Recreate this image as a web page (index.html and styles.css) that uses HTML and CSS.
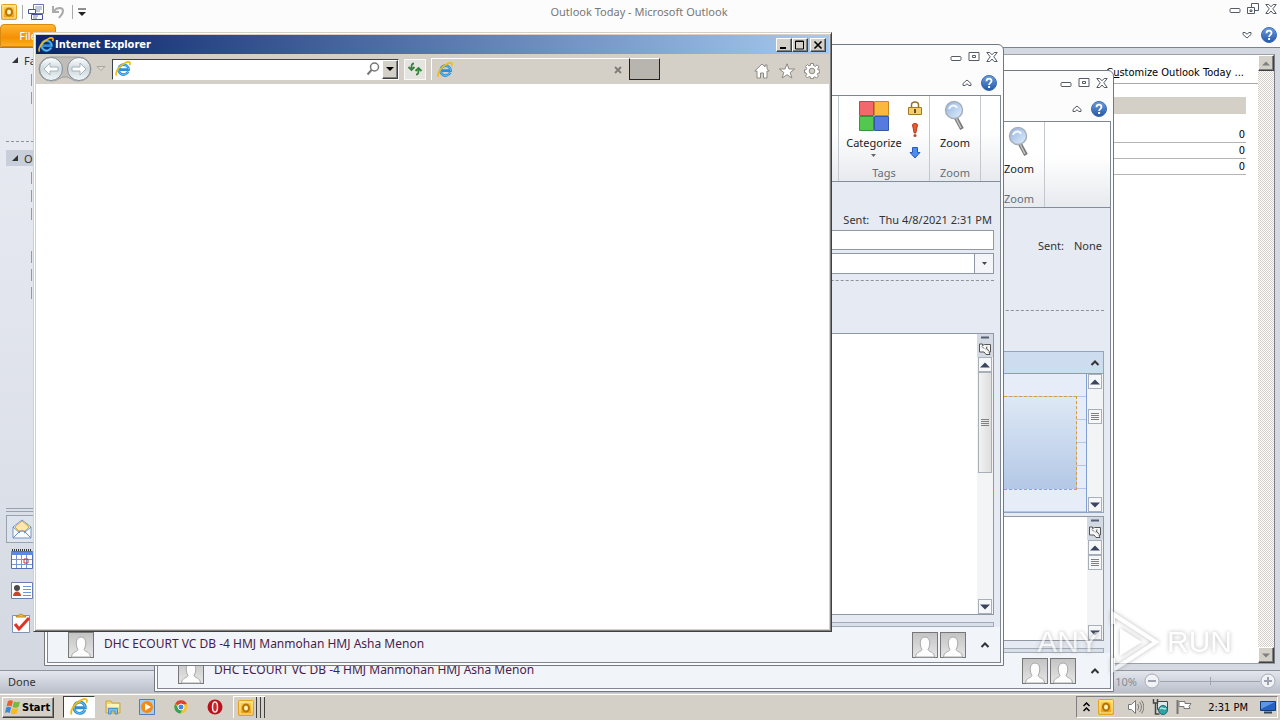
FILE: index.html
```
<!DOCTYPE html>
<html lang="en">
<head>
    <meta charset="UTF-8">
    <meta name="viewport" content="width=device-width, initial-scale=1.0">
    <link rel="stylesheet" href="styles.css">
    <title>Desktop</title>
</head>
<body>

    <!-- shared icons -->
    <svg class="sprite" width="0" height="0" aria-hidden="true">
        <defs>
            <linearGradient id="gold" x1="0" y1="0" x2="0" y2="1"><stop offset="0" stop-color="#ffd65a"/><stop offset="1" stop-color="#eb9a08"/></linearGradient>
            <linearGradient id="blue" x1="0" y1="0" x2="0" y2="1"><stop offset="0" stop-color="#6e9fe0"/><stop offset="1" stop-color="#2456a8"/></linearGradient>
            <linearGradient id="ball" x1="0" y1="0" x2="0" y2="1"><stop offset="0" stop-color="#ffffff"/><stop offset="0.5" stop-color="#cfd8dd"/><stop offset="1" stop-color="#f2f7f9"/></linearGradient>
            <linearGradient id="photo" x1="0" y1="0" x2="0" y2="1"><stop offset="0" stop-color="#c3c3c3"/><stop offset="1" stop-color="#e6e6e6"/></linearGradient>
            <linearGradient id="lens" x1="0" y1="0" x2="1" y2="1"><stop offset="0" stop-color="#8fb0e0"/><stop offset="1" stop-color="#e3f1fd"/></linearGradient>
        </defs>
        <symbol id="ie" viewBox="0 0 16 16">
            <path d="M13.2 10.6A5 5 0 1 1 13.6 8.6H4.6" fill="none" stroke="#2b8fd8" stroke-width="2.6"/>
            <path d="M13.2 10.6A5 5 0 1 1 13.6 8.6" fill="none" stroke="#74c8f5" stroke-width="0.8"/>
            <path d="M1.6 14.6C-.6 12 4 4.600 10 1.900 14-.1 16 .9 14.600 4.200" fill="none" stroke="#f2b90f" stroke-width="1.600"/>
        </symbol>
        <symbol id="outlook" viewBox="0 0 16 16">
            <rect x="0.5" y="0.5" width="15" height="15" rx="1" fill="url(#gold)" stroke="#e9a21c"/>
            <rect x="2" y="2" width="12" height="12" fill="none" stroke="#fff0b4"/>
            <ellipse cx="8" cy="8" rx="3" ry="3.500" fill="#fff3b8" stroke="#b87400" stroke-width="2"/>
        </symbol>
        <symbol id="help" viewBox="0 0 16 16">
            <circle cx="8" cy="8" r="7.500" fill="url(#blue)" stroke="#3a6cb4"/>
            <path d="M5.500 6.200C5.600 2.800 10.600 3 10.500 6 10.400 7.800 8.100 7.900 8.100 10" fill="none" stroke="#fff" stroke-width="1.800"/>
            <rect x="7.100" y="11" width="2" height="2" fill="#fff"/>
        </symbol>
        <symbol id="win-min" viewBox="0 0 12 12"><rect x="1" y="5.500" width="10" height="4" rx="1" fill="#fff" stroke="#555b66"/></symbol>
        <symbol id="win-max" viewBox="0 0 12 12"><path d="M1 1.500h10v8H1zM4.500 4.500h3v2h-3z" fill="#fff" stroke="#555b66"/></symbol>
        <symbol id="win-restore" viewBox="0 0 12 12"><path d="M4.500.5h7v7h-7z" fill="#fff" stroke="#555b66"/><path d="M.5 4.500h7v6h-7zM3 7h2v1.500H3z" fill="#fff" stroke="#555b66"/></symbol>
        <symbol id="win-close" viewBox="0 0 12 12"><path d="M.8 1.500h3L6 3.800 8.200 1.500h3L7.800 5.800l3.400 4.700h-3L6 8 3.800 10.500h-3l3.400-4.700z" fill="#fff" stroke="#555b66"/></symbol>
        <symbol id="caret-up" viewBox="0 0 10 8"><path d="M5 1 9 4.500V6.500H7L5 4.800 3 6.500H1V4.500z" fill="#fff" stroke="#555b66"/></symbol>
        <symbol id="caret-down" viewBox="0 0 10 8"><path d="M5 7 1 3.500V1.500H3L5 3.200 7 1.500H9V3.500z" fill="#fff" stroke="#555b66"/></symbol>
        <symbol id="chevron" viewBox="0 0 10 8"><path d="M1.500 6 5 2.500 8.500 6" fill="none" stroke="#333" stroke-width="2"/></symbol>
        <symbol id="up" viewBox="0 0 10 6"><path d="M0 5.500 5 .5l5 5z" fill="currentColor"/></symbol>
        <symbol id="down" viewBox="0 0 10 6"><path d="M0 .5 5 5.500l5-5z" fill="currentColor"/></symbol>
        <symbol id="split" viewBox="0 0 14 20">
            <path d="M3 2h8" stroke="#56606e" stroke-width="2"/>
            <path d="M1.500 8.500h3v1.500l2-1h6v7.500h-1.500l1 2.500h-4l-2-2.500h-4.500z" fill="#f5f5f5" stroke="#555"/>
            <path d="M4 11l2 2m3-2l-1 3m1-1l2 3" stroke="#555"/>
        </symbol>
        <symbol id="grip" viewBox="0 0 8 8"><path d="M0 .5h8M0 2.500h8M0 4.500h8M0 6.500h8" stroke="#808080"/></symbol>
        <symbol id="person" viewBox="0 0 26 26">
            <rect x="0.500" y="0.500" width="25" height="25" fill="url(#photo)" stroke="#777"/>
            <path d="M3.500 25C4 19 9 20.500 10 17.500 7.500 14 7 5 13 5s5.500 9 3 12.500c1 3 6 1.500 6.500 7.500z" fill="#fdfdfd" stroke="#a9a9a9"/>
        </symbol>
        <symbol id="magnifier" viewBox="0 0 24 32">
            <path d="M13 18 19 29" stroke="#777" stroke-width="4"/>
            <path d="M13 18 18 28" stroke="#c4c4c4" stroke-width="1.500"/>
            <circle cx="11" cy="10" r="8.500" fill="url(#lens)" stroke="#a7afbb" stroke-width="1.500"/>
            <path d="M6 9c2-5 7-4 8-1" fill="none" stroke="#f4f9ff" stroke-width="2"/>
        </symbol>
        <symbol id="zoom-out" viewBox="0 0 16 16"><circle cx="8" cy="8" r="7" fill="#f1f2f5" stroke="#a9adb7"/><path d="M4 8h8" stroke="#9da1ab" stroke-width="2"/></symbol>
        <symbol id="zoom-in" viewBox="0 0 16 16"><circle cx="8" cy="8" r="7" fill="#f1f2f5" stroke="#a9adb7"/><path d="M4 8h8M8 4v8" stroke="#9da1ab" stroke-width="2"/></symbol>
    </svg>

    <div class="desktop">

        <!-- Outlook main window -->
        <main class="outlook">
            <header class="outlook-title">
                <div class="quick">
                    <svg width="16" height="16"><use href="#outlook"/></svg>
                    <i></i>
                    <svg width="16" height="16" viewBox="0 0 16 16"><path d="M5.500.5h10v9h-10z" fill="#fff" stroke="#6a74a8"/><path d="M7 3h7M7 5h7M7 7h5" stroke="#8a93bb"/><path d="M.5 5.500h7v4h-7zM3.500 10.500h11v5h-11z" fill="#fff" stroke="#454f96"/><path d="M5 12h5M5 14h4" stroke="#7680b4"/></svg>
                    <svg class="undo" width="14" height="14" viewBox="0 0 14 14"><path d="M2 1v6h6M3 6c3-4 9-4 9 0 0 3-2 4-4 7" fill="none" stroke="#aaa" stroke-width="2"/></svg>
                    <i></i>
                    <svg width="8" height="8" viewBox="0 0 8 8"><path d="M0 1h8" stroke="#222"/><path d="M0 4h8L4 8z" fill="#222"/></svg>
                </div>
                <span>Outlook Today - Microsoft Outlook</span>
                <div class="controls">
                    <svg width="12" height="12"><use href="#win-min"/></svg>
                    <svg width="12" height="12"><use href="#win-restore"/></svg>
                    <svg width="12" height="12"><use href="#win-close"/></svg>
                </div>
            </header>
            <div class="outlook-tabs">
                <button class="file">File</button>
                <div class="tab-tools">
                    <svg width="10" height="8"><use href="#caret-down"/></svg>
                    <svg width="16" height="16"><use href="#help"/></svg>
                </div>
            </div>

            <div class="outlook-body">
                <nav class="folders">
                    <div class="folder-head"><svg width="6" height="6" viewBox="0 0 6 6"><path d="M6 0v6H0z" fill="#333"/></svg>Favorites</div>
                    <div class="folder"></div>
                    <div class="folder"></div>
                    <hr>
                    <div class="folder-head current"><svg width="6" height="6" viewBox="0 0 6 6"><path d="M6 0v6H0z" fill="#333"/></svg>Outlook</div>
                    <div class="folder"></div>
                    <div class="folder"></div>
                    <div class="folder"></div>
                    <div class="folder spaced"></div>
                    <div class="folder"></div>
                    <div class="folder"></div>
                    <div class="modules">
                        <button class="module active" aria-label="Mail"><svg width="20" height="20" viewBox="0 0 20 20"><path d="M1 8 10 1l9 7v11H1z" fill="#f8fbff" stroke="#7893bd"/><path d="M3 8l7-6 7 6-4 4H7z" fill="#ffe9a8" stroke="#d9aa4d"/><path d="M1 19l7-7h4l7 7M1 8l7 6M19 8l-7 6" fill="none" stroke="#6a8cc0"/></svg></button>
                        <button class="module" aria-label="Calendar"><svg width="22" height="20" viewBox="0 0 22 20"><path d="M.5 2.500h21v17H.5z" fill="#fff" stroke="#5470b0"/><path d="M0 3h22v3H0z" fill="#5b8ae0"/><path d="M1 1h20" stroke="#333" stroke-dasharray="1 1" stroke-width="2"/><path d="M1 10.500h20M1 15.500h20M5.500 6v13M10.500 6v13M15.500 6v13" stroke="#7a94cf"/><path d="M13 10h4v4h-4z" fill="none" stroke="#c33"/></svg></button>
                        <button class="module" aria-label="Contacts"><svg width="22" height="18" viewBox="0 0 22 18"><path d="M.5.5h21v16H.5z" fill="#fff" stroke="#6b7fa8"/><circle cx="6" cy="6" r="3" fill="#4b4a4a"/><path d="M2 14c0-6 8-6 8 0z" fill="#c4472a"/><path d="M12 4.500h8M12 7.500h8M12 10.500h8M12 13.500h8" stroke="#6c96d8"/></svg></button>
                        <button class="module" aria-label="Tasks"><svg width="20" height="20" viewBox="0 0 20 20"><path d="M1.500 2.500h17v17h-17z" fill="#fff" stroke="#7f93b5"/><path d="M5 4c0-2 3-1 5-3 2 2 5 1 5 3z" fill="#f0c04a" stroke="#b98a1e"/><path d="M4 11l4 5L18 5" fill="none" stroke="#df3526" stroke-width="3"/></svg></button>
                    </div>
                </nav>
                <section class="today">
                    <div class="today-page">
                        <div class="today-top"><a href="#">C<u>u</u>stomize Outlook Today ...</a></div>
                        <div class="today-bar"></div>
                        <table class="counts">
                            <tr><td>0</td></tr>
                            <tr><td>0</td></tr>
                            <tr><td>0</td></tr>
                        </table>
                    </div>
                    <div class="classic-scroll">
                        <button aria-label="Scroll up"><svg width="8" height="5"><use href="#up"/></svg></button>
                        <button aria-label="Scroll down"><svg width="8" height="5"><use href="#down"/></svg></button>
                    </div>
                </section>
            </div>

            <footer class="status">
                <span>Done</span>
                <div class="zoom-level">
                    <span>10%</span>
                    <svg width="16" height="16"><use href="#zoom-out"/></svg>
                    <div class="zoom-track"></div>
                    <svg width="16" height="16"><use href="#zoom-in"/></svg>
                </div>
            </footer>
        </main>

        <!-- meeting window -->
        <section class="message meeting">
            <div class="message-title">
                <svg width="12" height="12"><use href="#win-min"/></svg>
                <svg width="12" height="12"><use href="#win-max"/></svg>
                <svg width="12" height="12"><use href="#win-close"/></svg>
            </div>
            <div class="message-tabs">
                <svg width="10" height="8"><use href="#caret-up"/></svg>
                <svg width="16" height="16"><use href="#help"/></svg>
            </div>
            <div class="frame">
                <div class="ribbon">
                    <div class="group group-zoom">
                        <button class="big"><svg width="24" height="32"><use href="#magnifier"/></svg>Zoom</button>
                        <span class="group-name">Zoom</span>
                    </div>
                    <div class="group-rest"></div>
                </div>
                <div class="content">
                    <div class="sent"><span>Sent:</span><span>None</span></div>
                    <hr>
                    <div class="preview">
                        <div class="preview-head"><svg width="10" height="8"><use href="#chevron"/></svg></div>
                        <div class="preview-body">
                            <div class="hours"><div class="slot"></div></div>
                            <div class="scroll">
                                <button aria-label="Scroll up"><svg width="10" height="6"><use href="#up"/></svg></button>
                                <div class="thumb"><svg width="8" height="8"><use href="#grip"/></svg></div>
                                <button aria-label="Scroll down"><svg width="10" height="6"><use href="#down"/></svg></button>
                            </div>
                        </div>
                    </div>
                    <div class="text-box">
                        <div class="scroll">
                            <svg class="split" width="14" height="20"><use href="#split"/></svg>
                            <button aria-label="Scroll up"><svg width="10" height="6"><use href="#up"/></svg></button>
                            <div class="thumb"><svg width="8" height="8"><use href="#grip"/></svg></div>
                            <button aria-label="Scroll down"><svg width="10" height="6"><use href="#down"/></svg></button>
                        </div>
                    </div>
                    <div class="splitter"></div>
                </div>
                <div class="people">
                    <svg width="26" height="26"><use href="#person"/></svg>
                    <span>DHC ECOURT VC DB -4 HMJ Manmohan HMJ Asha Menon</span>
                    <svg width="26" height="26"><use href="#person"/></svg>
                    <svg width="26" height="26"><use href="#person"/></svg>
                    <svg class="expand" width="10" height="8"><use href="#chevron"/></svg>
                </div>
            </div>
        </section>

        <!-- mail window -->
        <section class="message mail">
            <div class="message-title">
                <svg width="12" height="12"><use href="#win-min"/></svg>
                <svg width="12" height="12"><use href="#win-max"/></svg>
                <svg width="12" height="12"><use href="#win-close"/></svg>
            </div>
            <div class="message-tabs">
                <svg width="10" height="8"><use href="#caret-up"/></svg>
                <svg width="16" height="16"><use href="#help"/></svg>
            </div>
            <div class="frame">
                <div class="ribbon">
                    <div class="group group-tags">
                        <div class="group-items">
                            <button class="big">
                                <svg width="32" height="32" viewBox="0 0 32 32"><path d="M1.500 1.500h14v14h-14z" fill="#f2686b" stroke="#b94a3c"/><path d="M16.500 1.500h14v14h-14z" fill="#fbb83f" stroke="#c88920"/><path d="M1.500 16.500h14v14h-14z" fill="#52c84f" stroke="#35953a"/><path d="M16.500 16.500h14v14h-14z" fill="#557be0" stroke="#3758a8"/></svg>
                                Categorize
                                <svg width="5" height="3" viewBox="0 0 5 3"><path d="M0 0h5L2.500 3z" fill="#666"/></svg>
                            </button>
                            <div class="small-icons">
                                <svg width="14" height="16" viewBox="0 0 14 16"><path d="M3.500 8V4c0-4 7-4 7 0v4" fill="none" stroke="#96712a" stroke-width="1.500"/><path d="M.5 6.500h13v7H.5z" fill="#f5ce6c" stroke="#a67820"/><path d="M7 8v4" stroke="#6d4d12" stroke-width="2"/></svg>
                                <svg width="14" height="16" viewBox="0 0 14 16"><path d="M4.500 2c0-2 5-2 5 0L7.800 10H6.200z" fill="#ee5a30" stroke="#b43a1c"/><circle cx="7" cy="12.500" r="1.500" fill="#c8411f"/></svg>
                                <svg width="14" height="16" viewBox="0 0 14 16"><path d="M4.500 2.500h5v5h2.500L7 13 2 7.500h2.500z" fill="#4c8df0" stroke="#2859b8"/></svg>
                            </div>
                        </div>
                        <span class="group-name">Tags</span>
                    </div>
                    <div class="group group-zoom">
                        <button class="big"><svg width="24" height="32"><use href="#magnifier"/></svg>Zoom</button>
                        <span class="group-name">Zoom</span>
                    </div>
                    <div class="group-rest"></div>
                </div>
                <div class="content">
                    <div class="sent"><span>Sent:</span><span>Thu 4/8/2021 2:31 PM</span></div>
                    <input class="field" type="text" aria-label="Location">
                    <div class="combo">
                        <select aria-label="When"><option></option></select>
                        <span><svg width="5" height="3" viewBox="0 0 5 3"><path d="M0 0h5L2.500 3z" fill="#444"/></svg></span>
                    </div>
                    <hr>
                    <div class="text-box">
                        <div class="scroll">
                            <svg class="split" width="14" height="20"><use href="#split"/></svg>
                            <button aria-label="Scroll up"><svg width="10" height="6"><use href="#up"/></svg></button>
                            <div class="thumb"><svg width="8" height="8"><use href="#grip"/></svg></div>
                            <button aria-label="Scroll down"><svg width="10" height="6"><use href="#down"/></svg></button>
                        </div>
                    </div>
                    <div class="splitter"></div>
                </div>
                <div class="people">
                    <svg width="26" height="26"><use href="#person"/></svg>
                    <span>DHC ECOURT VC DB -4 HMJ Manmohan HMJ Asha Menon</span>
                    <svg width="26" height="26"><use href="#person"/></svg>
                    <svg width="26" height="26"><use href="#person"/></svg>
                    <svg class="expand" width="10" height="8"><use href="#chevron"/></svg>
                </div>
            </div>
        </section>

        <!-- Internet Explorer -->
        <section class="explorer">
            <div class="explorer-title">
                <svg width="16" height="16"><use href="#ie"/></svg>
                <h1>Internet Explorer</h1>
                <button aria-label="Minimize"><svg width="12" height="10" viewBox="0 0 12 10"><path d="M2 8h6" stroke="#000" stroke-width="2"/></svg></button>
                <button aria-label="Maximize"><svg width="12" height="10" viewBox="0 0 12 10"><path d="M1.500 1h8v8h-8zM1 1.500h9" fill="none" stroke="#000"/></svg></button>
                <button class="close" aria-label="Close"><svg width="12" height="10" viewBox="0 0 12 10"><path d="M2.500 1.500l7 7m0-7l-7 7" stroke="#000" stroke-width="1.600"/></svg></button>
            </div>
            <div class="toolbar">
                <div class="history">
                    <svg width="54" height="26" viewBox="0 0 54 26"><path d="M13 1h28a12 12 0 0 1 0 24c-8 0-8-4-14-4s-6 4-14 4a12 12 0 0 1 0-24z" fill="#c0bdb8" stroke="#a29f9a"/><circle cx="13" cy="13" r="11.500" fill="url(#ball)" stroke="#7e8d96"/><circle cx="41" cy="13" r="11.500" fill="url(#ball)" stroke="#7e8d96"/><path d="M6 13l6-6v4h8v4h-8v4zM48 13l-6-6v4h-8v4h8v4z" fill="#fff" stroke="#a3b4bf"/></svg>
                    <svg width="10" height="6" viewBox="0 0 10 6"><path d="M1 .5h8l-4 4z" fill="#dedad4" stroke="#a8a49e"/></svg>
                </div>
                <div class="address">
                    <svg width="16" height="16"><use href="#ie"/></svg>
                    <input type="text" aria-label="Address">
                    <svg width="14" height="14" viewBox="0 0 14 14"><circle cx="8.500" cy="5" r="4" fill="none" stroke="#777" stroke-width="1.500"/><path d="M5.500 8 1.500 12.500" stroke="#777" stroke-width="2"/></svg>
                    <button aria-label="Show history"><svg width="8" height="4" viewBox="0 0 8 4"><path d="M0 0h8L4 4z"/></svg></button>
                </div>
                <button class="refresh" aria-label="Refresh"><svg width="16" height="16" viewBox="0 0 16 16"><path d="M7 2.500C4.500 2.500 4.500 4 4.500 8M1.500 6l3 3 3-3M9 13.500c2.500 0 2.500-1.500 2.500-5.500M8.500 10l3-3 3 3" fill="none" stroke="#35833a" stroke-width="1.800"/></svg></button>
                <div class="tab">
                    <svg width="16" height="16"><use href="#ie"/></svg>
                    <svg width="8" height="8" viewBox="0 0 8 8"><path d="M1 1l6 6m0-6L1 7" stroke="#7f7b76" stroke-width="1.800"/></svg>
                </div>
                <button class="new-tab" aria-label="New tab"></button>
                <div class="tools">
                    <svg width="16" height="16" viewBox="0 0 16 16"><path d="M8 1 .8 8H3v7h3.500v-5h3v5H13V8h2.200L13 5.800V2h-2v2z" fill="#fff" stroke="#8d8983"/></svg>
                    <svg width="18" height="16" viewBox="0 0 18 16"><path d="M9 .8l2 5.200h5.700l-4.500 3.500 1.700 5.500L9 11.700 4.100 15l1.700-5.500L1.300 6H7z" fill="#fff" stroke="#8d8983"/></svg>
                    <svg width="16" height="16" viewBox="0 0 16 16"><path d="M6.500.5h3v2l2 .8 1.500-1.400 2 2-1.300 1.700.5 1.400h1.500v3h-1.700l-.7 1.700 1.200 1.300-2 2-1.600-1.200-1.400.6v1.200h-3v-1.500l-1.600-.6L3.500 15l-2-2 1.200-1.500-.7-1.700H.5v-3H2l.7-1.500L1.500 3.500l2-2L5 3l1.500-.7z" fill="#fff" stroke="#8d8983"/><circle cx="8" cy="8" r="2.800" fill="#d4d0c8" stroke="#8d8983"/></svg>
                </div>
            </div>
            <div class="page"></div>
        </section>

        <!-- recorder badge -->
        <div class="watermark">
            <span>ANY</span>
            <svg width="54" height="64" viewBox="0 0 54 64"><path d="M7 14V4L50 32 7 60V48" fill="none" stroke="#fff" stroke-width="4"/><path d="M14 18 36 32 14 46z" fill="#fff"/></svg>
            <span>RUN</span>
        </div>

        <footer class="taskbar">
            <button class="start"><svg width="16" height="16" viewBox="0 0 16 16"><path d="M3 2c2-1 3-1 5 0L6.500 7.500c-2-1-3-1-5 0z" fill="#e8602c"/><path d="M9 2.500c2 1 4 1 6 0L13.500 8c-2 1-4 1-6 0z" fill="#79b938"/><path d="M1.200 8.500c2-1 3-1 5 0L4.700 14c-2-1-3-1-4.700 0z" fill="#3b88d6"/><path d="M7.200 9c2 1 4 1 6 0l-1.500 5.500c-2 1-4 1-6 0z" fill="#f6bb22"/></svg>Start</button>
            <div class="tasks">
                <button class="task pressed" aria-label="Internet Explorer"><svg width="18" height="18"><use href="#ie"/></svg></button>
                <button class="task" aria-label="Explorer"><svg width="16" height="16" viewBox="0 0 16 16"><path d="M1 2h5l1 2h8v10H1z" fill="#f3d571" stroke="#c9a543"/><path d="M2 5h12v3H2z" fill="#fff3bd"/><path d="M3.500 15V9.500h9V15h-2.500v-3H6v3z" fill="#7cc3ec" stroke="#4790c4"/></svg></button>
                <button class="task" aria-label="Media Player"><svg width="16" height="16" viewBox="0 0 16 16"><path d="M.5.5h15v15H.5z" fill="#a7cdf3" stroke="#4a7fc0"/><circle cx="8" cy="8" r="6" fill="#f58a13"/><path d="M6 4.500v7L12 8z" fill="#fff"/></svg></button>
                <button class="task" aria-label="Chrome"><svg width="14" height="14" viewBox="0 0 14 14"><circle cx="7" cy="7" r="6.500" fill="#f6c52c"/><path d="M7 7 1.200 3.700A6.600 6.600 0 0 1 13 4.200H7z" fill="#dc4234"/><path d="M1.200 3.700A6.600 6.600 0 0 0 6.500 13.600L9 8.500 5 9z" fill="#35a352"/><circle cx="7" cy="7" r="3" fill="#4285e8" stroke="#fff"/></svg></button>
                <button class="task" aria-label="Opera"><svg width="16" height="16" viewBox="0 0 16 16"><circle cx="8" cy="8" r="7.500" fill="#b8131a"/><ellipse cx="8" cy="8" rx="2.500" ry="5" fill="#d3262c" stroke="#f7e4e4" stroke-width="1.500"/></svg></button>
                <button class="task stacked" aria-label="Outlook"><svg width="16" height="16"><use href="#outlook"/></svg></button>
            </div>
            <div class="tray">
                <svg width="7" height="10" viewBox="0 0 7 10"><path d="M.5 4l3-3 3 3M.5 9l3-3 3 3" fill="none" stroke="#000" stroke-width="1.500"/></svg>
                <svg width="16" height="16"><use href="#outlook"/></svg>
                <svg class="speaker" width="16" height="16" viewBox="0 0 16 16"><path d="M.5 5.500h3l4-4v13l-4-4h-3z" fill="#fff" stroke="#777"/><path d="M9.500 5c1.500 2 1.500 4 0 6M11.500 3c2.500 3 2.500 7 0 10M13.500 1.500c3 4 3 9 0 13" fill="none" stroke="#777"/></svg>
                <svg width="16" height="16" viewBox="0 0 16 16"><path d="M5.500 2.500h10v8h-10z" fill="#dce8ee" stroke="#444"/><path d="M1.500 0v4h4V0M3.500 4v11h4" fill="none" stroke="#444" stroke-width="1.500"/><circle cx="11" cy="11" r="4.500" fill="#34a0a4" stroke="#1e6c75"/><path d="M8 10c3-3 4 2 6-1" fill="none" stroke="#a7ead8" stroke-width="1.500"/></svg>
                <svg width="16" height="16" viewBox="0 0 16 16"><path d="M1.500 15V1" stroke="#777" stroke-width="2"/><path d="M3 2.500h6v2h6l-2 3 1 2H8v-2H3z" fill="#fff" stroke="#777"/></svg>
                <time>2:31 PM</time>
                <svg width="16" height="14" viewBox="0 0 16 14"><path d="M.5 1.500h15v9H.5z" fill="#2461c0" stroke="#173a78"/><path d="M1 2h14L1 9z" fill="#5b97e4"/><path d="M4 12.500h8" stroke="#345" stroke-width="2"/></svg>
            </div>
        </footer>
    </div>

</body>
</html>
```
FILE: styles.css
```
* {
    box-sizing: border-box;
}

body {
    margin: 0;
    font-family: "Noto Sans", "Open Sans", sans-serif;
    font-size: 11px;
    color: #333;
}

button {
    padding: 0;
    border: none;
    background: none;
    font: inherit;
    color: inherit;
}

svg {
    display: block;
    flex: none;
}

hr {
    border: none;
    border-top: 1px dashed #8b93a0;
    margin: 0;
}

.sprite {
    position: absolute;
}

.desktop {
    position: relative;
    display: flex;
    flex-direction: column;
    height: 100vh;
    overflow: hidden;
}

/* Outlook main window */
.outlook {
    flex: 1;
    min-height: 0;
    display: flex;
    flex-direction: column;
    background-color: #fcfcfc;
}

.outlook-title {
    display: grid;
    grid-template-columns: 1fr auto 1fr;
    align-items: center;
    height: 24px;
    padding: 0 3px 1px 1px;
    color: #777;
}

.quick, .controls, .tab-tools {
    display: flex;
    align-items: center;
}

.quick {
    gap: 5px;
}

.quick i {
    width: 1px;
    height: 14px;
    background-color: #aaa;
}

.undo {
    margin: 0 2px;
}

.controls {
    justify-content: flex-end;
    gap: 6px;
    padding-bottom: 5px;
}

.outlook-tabs {
    display: flex;
    justify-content: space-between;
    height: 24px;
    padding-right: 3px;
    border-bottom: 1px solid #7d838c;
}

.file {
    width: 56px;
    border: 1px solid #d98a12;
    border-radius: 4px 4px 0 0;
    background: linear-gradient(#ffb52e, #f58f05 60%, #ffae20);
    color: #fff;
}

.tab-tools {
    gap: 9px;
    padding-bottom: 2px;
}

.outlook-body {
    flex: 1;
    min-height: 0;
    display: flex;
    background-color: #d5dae2;
}

.folders {
    display: flex;
    flex-direction: column;
    width: 200px;
    padding: 4px 6px 0;
    background: linear-gradient(#e9ecf3, #dce0e9 70%, #d3d8e0);
}

.folder-head {
    display: flex;
    align-items: center;
    gap: 6px;
    height: 16px;
    padding-left: 6px;
    margin-bottom: 3px;
}

.folder-head.current {
    background-color: #c9cfda;
}

.folder {
    height: 18px;
    margin-left: 25px;
    border-left: 1px solid #999;
    border-image: linear-gradient(transparent 20%, #999 20%, #999 80%, transparent 80%) 1;
}

.folder.spaced {
    margin-top: 25px;
}

.folders hr {
    margin: 34px 0 8px;
}

.modules {
    margin-top: auto;
    padding: 3px 0 31px;
    border-top: 4px double #9aa2ae;
}

.module {
    display: flex;
    align-items: center;
    width: 100%;
    height: 32px;
    padding-left: 5px;
}

.module.active {
    height: 28px;
    border: 1px solid #9aa2b0;
    background-color: #dde4ee;
}

.today {
    flex: 1;
    display: flex;
    margin: 6px 5px 6px 0;
    border-top: 1px solid #9aa0a8;
    border-right: 1px solid #7b8088;
    border-bottom: 1px solid #9aa0a8;
    background-color: #fff;
    font-family: "DejaVu Sans Condensed", "DejaVu Sans", sans-serif;
    color: #000;
}

.today-page {
    flex: 1;
}

.today-top {
    height: 29px;
    padding: 11px 14px 0 0;
    border-bottom: 1px solid #aaa;
    text-align: right;
}

.today-top a {
    color: #000;
    text-decoration: none;
}

.today-bar {
    height: 17px;
    margin: 13px 12px 13px 0;
    background-color: #d4d0c8;
}

.counts {
    width: calc(100% - 12px);
    border-spacing: 0;
}

.counts td {
    height: 16px;
    padding: 0 1px;
    border-bottom: 1px solid #b5b5b5;
    line-height: 15px;
    text-align: right;
}

.classic-scroll {
    display: flex;
    flex-direction: column;
    justify-content: space-between;
    width: 16px;
    background: repeating-conic-gradient(#d4d0c8 0 25%, #fff 0 50%) 0 0 / 2px 2px;
}

.classic-scroll button, .address button, .explorer-title button {
    display: flex;
    align-items: center;
    justify-content: center;
    border: 1px solid;
    border-color: #fff #404040 #404040 #fff;
    background-color: #d4d0c8;
    box-shadow: inset -1px -1px #808080;
}

.classic-scroll button {
    height: 16px;
    color: #808080;
}

.status {
    display: flex;
    align-items: center;
    justify-content: space-between;
    height: 23px;
    padding: 0 4px 2px 8px;
    border-top: 1px solid #8e949e;
    background: linear-gradient(#e3e6ed, #b9bec9);
}

.zoom-level {
    display: flex;
    align-items: center;
    gap: 7px;
    color: #888c94;
}

.zoom-track {
    width: 100px;
    height: 8px;
    margin: 0 -7px;
    background: linear-gradient(#a0a4ae, #a0a4ae) center / 1px 100% no-repeat, linear-gradient(#a0a4ae, #a0a4ae) center / 100% 1px no-repeat;
}

/* message windows */
.message {
    position: absolute;
    display: flex;
    flex-direction: column;
    padding: 0 2px 2px;
    border: 1px solid #727984;
    border-radius: 6px 6px 0 0;
    background-color: #fcfcfc;
}

.mail {
    inset: 44px 276px 54px 44px;
}

.meeting {
    inset: 70px 166px 28px 154px;
}

.message-title, .message-tabs {
    display: flex;
    align-items: center;
    justify-content: flex-end;
}

.message-title {
    gap: 6px;
    height: 25px;
    padding: 0 3px 2px 0;
}

.message-tabs {
    gap: 9px;
    height: 25px;
    padding-right: 4px;
}

.frame {
    flex: 1;
    min-height: 0;
    display: flex;
    flex-direction: column;
    border: 1px solid #7f8792;
    background-color: #e6eaf2;
}

.ribbon {
    display: flex;
    justify-content: flex-end;
    height: 86px;
    border-bottom: 1px solid #858d98;
    background: linear-gradient(#fff 40%, #e7eaee);
}

.group {
    display: flex;
    flex-direction: column;
    align-items: center;
    justify-content: space-between;
    padding-top: 4px;
    border-right: 1px solid #c3c8cf;
}

.group-tags {
    width: 92px;
    border-left: 1px solid #c3c8cf;
}

.group-zoom {
    width: 51px;
}

.group-items {
    display: flex;
    gap: 6px;
}

.big {
    display: flex;
    flex-direction: column;
    align-items: center;
    line-height: 22px;
    color: #222;
}

.small-icons {
    display: flex;
    flex-direction: column;
    gap: 6px;
    padding-top: 1px;
}

.group-name {
    line-height: 16px;
    color: #666d78;
}

.group-rest {
    width: 19px;
}

.meeting .group-rest {
    width: 65px;
}

.content {
    flex: 1;
    min-height: 0;
    display: flex;
    flex-direction: column;
    padding: 28px 6px 0;
}

.sent {
    display: flex;
    justify-content: flex-end;
    gap: 10px;
    padding-right: 2px;
    line-height: 20px;
}

.field {
    height: 20px;
    border: 1px solid #8f98a4;
    background-color: #fff;
}

.combo {
    display: flex;
    height: 21px;
    margin: 3px 0 6px;
    border: 1px solid #8f98a4;
    background-color: #fff;
}

.combo select {
    flex: 1;
    appearance: none;
    border: none;
    background: none;
}

.combo span {
    display: flex;
    align-items: center;
    justify-content: center;
    width: 19px;
    border-left: 1px solid #8f98a4;
    background-color: #f3f5f8;
}

.text-box {
    flex: 1;
    min-height: 0;
    display: flex;
    justify-content: flex-end;
    border: 1px solid #8f98a4;
    background-color: #fff;
}

.mail .text-box {
    margin-top: 52px;
}

.scroll {
    display: flex;
    flex-direction: column;
    align-items: center;
    width: 16px;
    background-color: #f3f4f6;
}

.split {
    width: 16px;
    padding: 0 1px;
    height: 23px;
    background-color: #d3dae4;
}

.scroll button, .thumb {
    display: flex;
    align-items: center;
    justify-content: center;
    width: 14px;
    height: 15px;
    border: 1px solid #a9afb8;
    background-color: #f6f7f9;
    color: #3b4560;
}

.scroll button:last-child {
    margin-top: auto;
}

.mail .thumb {
    height: 101px;
    background: linear-gradient(to right, #f2f2f2, #dedede);
}

.splitter {
    height: 5px;
    margin-top: 7px;
    border: 1px solid #a3abb7;
    background-color: #d9dfe8;
}

.meeting hr {
    margin-top: 54px;
}

.preview {
    display: flex;
    flex-direction: column;
    height: 162px;
    margin: 40px 0 3px;
    border: 1px solid #92a5c0;
    background-color: #e6edf8;
}

.preview-head {
    display: flex;
    align-items: center;
    justify-content: flex-end;
    height: 22px;
    padding-right: 3px;
    border-bottom: 1px solid #7f9fd0;
    background-color: #cddcef;
}

.preview-body {
    flex: 1;
    display: flex;
}

.hours {
    flex: 1;
    padding: 22px 9px 22px 0;
    border-right: 1px solid #7f9fd0;
    background: repeating-linear-gradient(#e6edf8 0 22px, #b3c8e6 22px 23px);
}

.slot {
    height: 100%;
    border: 1px dashed #d79a3c;
    background: linear-gradient(#dee8f5, #b3c8e6);
}

.preview .thumb {
    margin-top: 20px;
}

.people {
    display: flex;
    align-items: center;
    gap: 2px;
    height: 35px;
    padding: 0 10px 0 20px;
    background-color: #f1f4f8;
}

.people span {
    flex: 1;
    padding: 0 0 2px 8px;
    font-size: 12px;
    color: #4a1c4c;
}

.expand {
    margin-left: 12px;
}

/* Internet Explorer */
.explorer {
    position: absolute;
    inset: 32px 448px 88px 33px;
    display: flex;
    flex-direction: column;
    padding: 2px;
    border: 1px solid;
    border-color: #d4d0c8 #404040 #404040 #d4d0c8;
    background-color: #d4d0c8;
    box-shadow: inset 1px 1px #fff, inset -1px -1px #808080;
}

.explorer-title {
    display: flex;
    align-items: center;
    height: 19px;
    padding: 1px 3px 1px 2px;
    background: linear-gradient(to right, #0a246a, #a6caf0);
    font-family: "DejaVu Sans Condensed", "DejaVu Sans", sans-serif;
    color: #fff;
}

.explorer-title h1 {
    flex: 1;
    margin: 0;
    padding-left: 1px;
    font-size: 11px;
}

.explorer-title button {
    width: 16px;
    height: 14px;
}

.explorer-title .close {
    margin-left: 2px;
}

.toolbar {
    display: flex;
    align-items: center;
    height: 30px;
    padding: 0 9px 0 2px;
}

.history {
    display: flex;
    align-items: center;
    gap: 4px;
    width: 74px;
}

.address {
    flex: 0 1 287px;
    display: flex;
    align-items: center;
    height: 21px;
    padding-left: 2px;
    border: 1px solid;
    border-color: #404040 #fff #fff #404040;
    background-color: #fff;
}

.address input {
    flex: 1;
    min-width: 0;
    border: none;
}

.address button {
    width: 16px;
    height: 19px;
    margin-left: 2px;
}

.refresh {
    display: flex;
    align-items: center;
    justify-content: center;
    width: 22px;
    height: 21px;
    margin: 0 5px;
    border: 1px solid #f8f8f8;
    background-color: #e6e4e0;
}

.tab {
    flex: 0 1 198px;
    display: flex;
    align-items: center;
    justify-content: space-between;
    height: 22px;
    padding: 0 7px 0 5px;
    border-top: 1px solid #fff;
    border-left: 1px solid #fff;
}

.new-tab {
    width: 31px;
    height: 22px;
    border: 1px solid;
    border-color: #fff #222 #222 #222;
    background-color: #b8b4ae;
}

.tools {
    display: flex;
    gap: 8px;
    margin-left: auto;
    padding-top: 3px;
}

.page {
    flex: 1;
    background-color: #fff;
}

.watermark {
    position: absolute;
    right: 48px;
    bottom: 46px;
    display: flex;
    align-items: center;
    gap: 7px;
    font-family: "Liberation Sans Narrow", "Liberation Sans", sans-serif;
    font-size: 30px;
    color: #fff;
    opacity: 0.6;
    filter: drop-shadow(0 0 2px #888);
}

/* taskbar */
.taskbar {
    display: flex;
    align-items: center;
    height: 27px;
    padding: 0 2px;
    border-top: 1px solid #d4d0c8;
    background-color: #d4d0c8;
    box-shadow: inset 0 1px #fff;
    font-family: "DejaVu Sans Condensed", "DejaVu Sans", sans-serif;
    color: #000;
}

.start {
    display: flex;
    align-items: center;
    gap: 1px;
    width: 52px;
    height: 21px;
    padding-left: 2px;
    border: 1px solid;
    border-color: #fff #404040 #404040 #fff;
    box-shadow: inset -1px -1px #808080;
    font-weight: bold;
}

.tasks {
    display: flex;
    gap: 2px;
    margin-left: 9px;
}

.task {
    display: flex;
    align-items: center;
    justify-content: center;
    width: 32px;
    height: 22px;
}

.pressed {
    border: 1px solid;
    border-color: #404040 #fff #fff #404040;
    background-color: #fff;
}

.stacked {
    justify-content: flex-start;
    padding-left: 4px;
    border-top: 1px solid #fff;
    border-left: 1px solid #fff;
    background: linear-gradient(to right, transparent 22px, #404040 22px 23px, transparent 23px 26px, #404040 26px 27px, transparent 27px 30px, #404040 30px);
}

.tray {
    display: flex;
    align-items: center;
    gap: 8px;
    height: 22px;
    margin-left: auto;
    padding: 0 1px 0 6px;
    border: 1px solid;
    border-color: #808080 #fff #fff #808080;
}

.speaker {
    margin-left: 6px;
}

.tray time {
    margin: 0 4px 0 8px;
}
```
